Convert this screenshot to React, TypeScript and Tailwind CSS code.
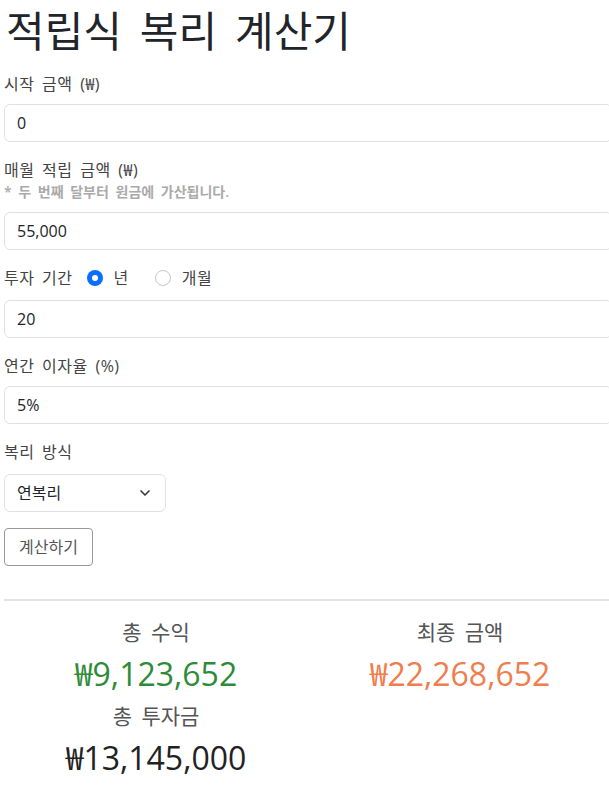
import React, { useState } from 'react';
import { ChevronDown } from 'lucide-react';

const fontStack = "font-['Open_Sans','Noto_Sans_CJK_KR',sans-serif]";

const Field: React.FC<{ value: string }> = ({ value }) => (
  <input
    readOnly
    value={value}
    className="block w-full h-[38px] px-3 border border-[#dee2e6] rounded-[6px] text-[16px] text-[#212529] bg-white outline-none"
  />
);

const Label: React.FC<{ children: React.ReactNode }> = ({ children }) => (
  <div className="text-[16px] leading-6 text-[#444] tracking-[0.5px] [word-spacing:3px]">{children}</div>
);

const Radio: React.FC<{ checked: boolean; label: string; onClick: () => void }> = ({ checked, label, onClick }) => (
  <button type="button" onClick={onClick} className="flex items-center gap-[11px]">
    {checked ? (
      <span className="w-4 h-4 rounded-full bg-[#0d6efd] flex items-center justify-center">
        <span className="w-[6px] h-[6px] rounded-full bg-white" />
      </span>
    ) : (
      <span className="w-4 h-4 rounded-full border border-[#c8c8c8] bg-white" />
    )}
    <span className="text-[16px] text-[#444] tracking-[0.5px]">{label}</span>
  </button>
);

export default function App() {
  const [unit, setUnit] = useState<'year' | 'month'>('year');

  return (
    <div className={`w-full overflow-hidden bg-white ${fontStack}`}>
      <div className="w-[616px] px-1">
        <h1 className="w-fit text-[42px] leading-[61px] mb-[11px] text-[#212529] pl-[2px] [word-spacing:7px] whitespace-nowrap">
          적립식 복리 계산기
        </h1>

        <div className="mb-4">
          <div className="mb-2">
            <Label>시작 금액 (₩)</Label>
          </div>
          <Field value="0" />
        </div>

        <div className="mb-4">
          <Label>매월 적립 금액 (₩)</Label>
          <div className="text-[14px] leading-5 font-semibold text-[#aaa] mb-[10px] [word-spacing:3px]">
            * 두 번째 달부터 원금에 가산됩니다.
          </div>
          <Field value="55,000" />
        </div>

        <div className="mb-4">
          <div className="flex items-center h-6 mb-[10px]">
            <Label>투자 기간</Label>
            <div className="ml-[14px]">
              <Radio checked={unit === 'year'} label="년" onClick={() => setUnit('year')} />
            </div>
            <div className="ml-[26px]">
              <Radio checked={unit === 'month'} label="개월" onClick={() => setUnit('month')} />
            </div>
          </div>
          <Field value="20" />
        </div>

        <div className="mb-4">
          <div className="mb-2">
            <Label>연간 이자율 (%)</Label>
          </div>
          <Field value="5%" />
        </div>

        <div className="mb-4">
          <div className="mb-[10px]">
            <Label>복리 방식</Label>
          </div>
          <div className="w-[162px] h-[38px] px-3 border border-[#dee2e6] rounded-[6px] flex items-center justify-between text-[16px] text-[#212529]">
            <span>연복리</span>
            <ChevronDown className="w-4 h-4 text-[#343a40]" strokeWidth={2.5} />
          </div>
        </div>

        <button
          type="button"
          className="w-[89px] h-[38px] border border-[#999] rounded-[4px] text-[16px] text-[#555] bg-white"
        >
          계산하기
        </button>

        <div className="mt-[33px] h-[2px] bg-[#e2e2e2]" />

        <div className="grid grid-cols-2 pt-4">
          <div className="flex flex-col items-center">
            <div className="text-[21px] leading-[30px] text-[#555] [word-spacing:4px]">총 수익</div>
            <div className="text-[32px] leading-[46px] text-[#2e8b37] mt-1">₩9,123,652</div>
            <div className="text-[21px] leading-[30px] text-[#555] mt-[4px] [word-spacing:4px]">총 투자금</div>
            <div className="text-[32px] leading-[46px] text-[#222] mt-1">₩13,145,000</div>
          </div>
          <div className="flex flex-col items-center">
            <div className="text-[21px] leading-[30px] text-[#555] [word-spacing:4px]">최종 금액</div>
            <div className="text-[32px] leading-[46px] text-[#f07d4e] mt-1">₩22,268,652</div>
          </div>
        </div>
      </div>
    </div>
  );
}
